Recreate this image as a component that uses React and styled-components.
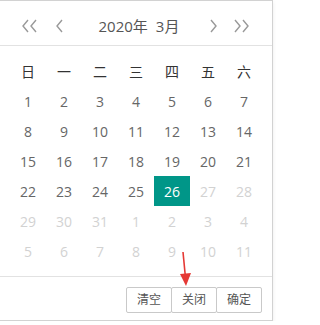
import React from 'react'
import styled, { createGlobalStyle } from 'styled-components'

const GlobalStyle = createGlobalStyle`
    html, body {
        margin: 0;
        padding: 0;
        background: #fff;
    }
    body {
        font-family: "Open Sans", "Noto Sans CJK SC", sans-serif;
    }
`

const Picker = styled.div`
    position: relative;
    width: 272px;
    margin-left: -1px;
    border: 1px solid #d2d2d2;
    background: #fff;
    color: #666;
    box-shadow: 0 2px 4px rgba(0, 0, 0, .08);
`

const Header = styled.div`
    height: 45px;
    box-sizing: border-box;
    padding: 5px 20px 0 20px;
    display: flex;
    align-items: center;
    border-bottom: 1px solid #e2e2e2;
`

const NavIcon = styled.span`
    width: ${props => props.wide ? 20 : 10}px;
    height: 16px;
    display: flex;
    align-items: center;
    justify-content: center;
    margin: ${props => props.margin};
    svg {
        display: block;
    }
`

const Title = styled.div`
    flex: 1;
    text-align: center;
    font-size: 15px;
    color: #555;
    letter-spacing: 0;
    padding-left: 6px;
    span + span {
        margin-left: 8px;
    }
`

const Content = styled.div`
    padding: 10px;
`

const Grid = styled.div`
    display: grid;
    grid-template-columns: repeat(7, 36px);
    grid-auto-rows: 30px;
`

const Cell = styled.div`
    display: flex;
    align-items: center;
    justify-content: center;
    font-size: 14px;
    color: ${props => props.head ? '#333' : props.muted ? '#d2d2d2' : '#666'};
    background: ${props => props.active ? '#009688' : 'transparent'};
    ${props => props.active && 'color: #fff;'}
`

const Footer = styled.div`
    height: 44px;
    box-sizing: border-box;
    padding: 10px;
    border-top: 1px solid #e2e2e2;
    display: flex;
    justify-content: flex-end;
    align-items: flex-start;
`

const Btn = styled.span`
    height: 26px;
    box-sizing: border-box;
    line-height: 24px;
    padding: 0 10px;
    border: 1px solid #c9c9c9;
    border-radius: 2px;
    background: #fff;
    font-size: 12px;
    color: #555;
    white-space: nowrap;
    & + & {
        margin-left: -1px;
    }
`

const Arrow = styled.svg`
    position: absolute;
    left: 177px;
    top: 249px;
`

const Chevron = ({ count, dir }) => {
    const pts = dir === 'left' ? '7,1 2,7 7,13' : '2,1 7,7 2,13'
    return (
        <svg width={count === 2 ? 18 : 9} height="14" viewBox={count === 2 ? '0 0 18 14' : '0 0 9 14'}>
            <polyline points={pts} fill="none" stroke="#999" strokeWidth="1.4" />
            {count === 2 && (
                <polyline points={pts} transform="translate(8 0)" fill="none" stroke="#999" strokeWidth="1.4" />
            )}
        </svg>
    )
}

const weekdays = ['日', '一', '二', '三', '四', '五', '六']

const buildDays = () => {
    const days = []
    for (let d = 1; d <= 31; d++) days.push({ n: d })
    for (let d = 1; d <= 11; d++) days.push({ n: d, muted: true })
    return days.map(day => day.n >= 27 && !day.muted ? { ...day, muted: true } : day)
}

const App = () => {
    const days = buildDays()

    return (
        <>
            <GlobalStyle />
            <Picker>
                <Header>
                    <NavIcon wide><Chevron count={2} dir="left" /></NavIcon>
                    <NavIcon margin="0 0 0 14px"><Chevron count={1} dir="left" /></NavIcon>
                    <Title><span>2020年</span><span>3月</span></Title>
                    <NavIcon margin="0 14px 0 0"><Chevron count={1} dir="right" /></NavIcon>
                    <NavIcon wide><Chevron count={2} dir="right" /></NavIcon>
                </Header>
                <Content>
                    <Grid>
                        {weekdays.map(w => <Cell head key={w}>{w}</Cell>)}
                        {days.map((day, i) => (
                            <Cell key={i} muted={day.muted} active={!day.muted && day.n === 26}>
                                {day.n}
                            </Cell>
                        ))}
                    </Grid>
                </Content>
                <Footer>
                    <Btn>清空</Btn>
                    <Btn>关闭</Btn>
                    <Btn>确定</Btn>
                </Footer>
                {/* red annotation arrow pointing at the close button */}
                <Arrow width="16" height="38" viewBox="0 0 16 38">
                    <line x1="6" y1="2" x2="8.5" y2="28" stroke="#e53935" strokeWidth="1.6" />
                    <polygon points="3,24 14,23 9,36" fill="#e53935" />
                </Arrow>
            </Picker>
        </>
    )
}

export default App
